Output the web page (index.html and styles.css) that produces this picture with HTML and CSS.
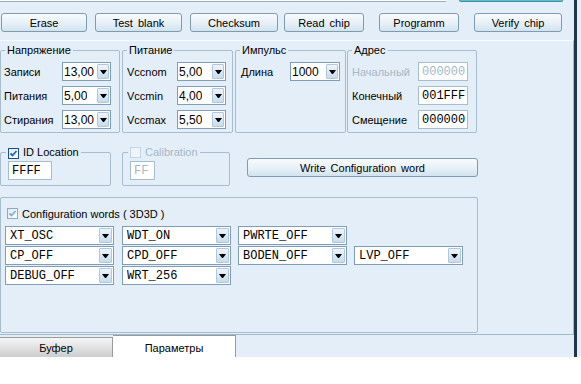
FILE: index.html
```html
<!DOCTYPE html>
<html lang="ru">
<head>
    <meta charset="UTF-8">
    <meta name="viewport" content="width=device-width, initial-scale=1.0">
    <title>Параметры</title>
    <link rel="stylesheet" href="styles.css">
</head>
<body>
    <div class="screen">
        <div class="window">
            <div class="topbar">
                <div class="top-field"></div>
                <div class="top-button"></div>
            </div>

            <div class="toolbar">
                <button class="btn btn-erase">Erase</button>
                <button class="btn btn-blank">Test blank</button>
                <button class="btn btn-checksum">Checksum</button>
                <button class="btn btn-read">Read chip</button>
                <button class="btn btn-prog">Programm</button>
                <button class="btn btn-verify">Verify chip</button>
            </div>

            <div class="page">
                <div class="groups">
                    <fieldset class="group g-voltage">
                        <legend>Напряжение</legend>
                        <div class="rows">
                            <div class="row"><span class="label">Записи</span><div class="combo"><span class="value">13,00</span><span class="drop"></span></div></div>
                            <div class="row"><span class="label">Питания</span><div class="combo"><span class="value">5,00</span><span class="drop"></span></div></div>
                            <div class="row"><span class="label">Стирания</span><div class="combo"><span class="value">13,00</span><span class="drop"></span></div></div>
                        </div>
                    </fieldset>

                    <fieldset class="group g-power">
                        <legend>Питание</legend>
                        <div class="rows">
                            <div class="row"><span class="label">Vccnom</span><div class="combo"><span class="value">5,00</span><span class="drop"></span></div></div>
                            <div class="row"><span class="label">Vccmin</span><div class="combo"><span class="value">4,00</span><span class="drop"></span></div></div>
                            <div class="row"><span class="label">Vccmax</span><div class="combo"><span class="value">5,50</span><span class="drop"></span></div></div>
                        </div>
                    </fieldset>

                    <fieldset class="group g-pulse">
                        <legend>Импульс</legend>
                        <div class="rows">
                            <div class="row"><span class="label">Длина</span><div class="combo"><span class="value">1000</span><span class="drop"></span></div></div>
                        </div>
                    </fieldset>

                    <fieldset class="group g-address">
                        <legend>Адрес</legend>
                        <div class="rows">
                            <div class="row disabled"><span class="label">Начальный</span><div class="field">000000</div></div>
                            <div class="row"><span class="label">Конечный</span><div class="field">001FFF</div></div>
                            <div class="row"><span class="label">Смещение</span><div class="field">000000</div></div>
                        </div>
                    </fieldset>
                </div>

                <div class="id-row">
                    <fieldset class="group g-id">
                        <legend><span class="check on"><svg viewBox="0 0 9 9"><path d="M1.5 4.5 L3.5 6.5 L7.5 2" /></svg></span>ID Location</legend>
                        <div class="field field-id">FFFF</div>
                    </fieldset>

                    <fieldset class="group g-calib disabled">
                        <legend><span class="check off"></span>Calibration</legend>
                        <div class="field field-calib">FF</div>
                    </fieldset>

                    <button class="btn btn-write">Write Configuration word</button>
                </div>

                <fieldset class="group g-config">
                    <div class="config-head">
                        <span class="check soft"><svg viewBox="0 0 9 9"><path d="M1.5 4.5 L3.5 6.5 L7.5 2" /></svg></span>
                        <span>Configuration words ( 3D3D )</span>
                    </div>
                    <div class="config-grid">
                        <div class="combo mono"><span class="value">XT_OSC</span><span class="drop"></span></div>
                        <div class="combo mono"><span class="value">WDT_ON</span><span class="drop"></span></div>
                        <div class="combo mono"><span class="value">PWRTE_OFF</span><span class="drop"></span></div>
                        <div></div>
                        <div class="combo mono"><span class="value">CP_OFF</span><span class="drop"></span></div>
                        <div class="combo mono"><span class="value">CPD_OFF</span><span class="drop"></span></div>
                        <div class="combo mono"><span class="value">BODEN_OFF</span><span class="drop"></span></div>
                        <div class="combo mono"><span class="value">LVP_OFF</span><span class="drop"></span></div>
                        <div class="combo mono"><span class="value">DEBUG_OFF</span><span class="drop"></span></div>
                        <div class="combo mono"><span class="value">WRT_256</span><span class="drop"></span></div>
                    </div>
                </fieldset>
            </div>

            <div class="tabs">
                <div class="tab">Буфер</div>
                <div class="tab active">Параметры</div>
            </div>
        </div>
        <div class="edge"></div>
    </div>
</body>
</html>
```

FILE: styles.css
```css
:root {
    --panel-color: #e4eef8;
    --frame-color: #9dbacc;
    --group-color: #a5bdcc;
    --input-border: #7f9db9;
    --disabled-color: #a4b7c6;
}

* {
    box-sizing: border-box;
    margin: 0;
    padding: 0;
}

body {
    width: 581px;
    height: 384px;
    overflow: hidden;
    background: #fff;
    font-family: 'Liberation Sans', Arial, sans-serif;
    font-size: 11px;
    color: #000;
}

.screen {
    display: flex;
    height: 357px;
    background: var(--panel-color);
}

.window {
    width: 574px;
    display: flex;
    flex-direction: column;
}

.edge {
    width: 3px;
    background: #1f3649;
}

/* strip of the panel above, cut by the screenshot */
.topbar {
    display: flex;
    height: 3px;
}

.top-field {
    width: 446px;
    height: 2px;
    background: #fff;
    border-bottom: 1px solid #94aebf;
}

.top-button {
    width: 104px;
    height: 2px;
    margin-left: 13px;
    background: #62bccd;
    border: 1px solid #3d8fa3;
    border-top: none;
    border-radius: 0 0 3px 3px;
}

.toolbar {
    display: flex;
    height: 37px;
    padding-top: 10px;
}

.btn {
    height: 19px;
    border: 1px solid #7d9cb0;
    border-radius: 3px;
    background: linear-gradient(#f8fbfe, #e8f1f8 50%, #d2e3ee);
    font-family: 'Liberation Sans', Arial, sans-serif;
    font-size: 11px;
    word-spacing: 2px;
    color: #000;
}

.btn-erase { width: 86px; margin-left: 1px; }
.btn-blank { width: 87px; margin-left: 8px; }
.btn-checksum { width: 88px; margin-left: 8px; }
.btn-read { width: 80px; margin-left: 6px; }
.btn-prog { width: 80px; margin-left: 15px; }
.btn-verify { width: 88px; margin-left: 15px; }

.page {
    height: 295px;
    border-top: 1px solid #f7fbfe;
    border-right: 1px solid var(--frame-color);
    border-bottom: 1px solid var(--frame-color);
    padding-top: 2px;
}

.group {
    border: 1px solid var(--group-color);
    border-radius: 2px;
    min-width: 0;
}

.group legend {
    margin-left: 4px;
    padding: 0 2px;
    line-height: 14px;
}

.groups {
    display: flex;
}

.groups .group {
    height: 90px;
}

.g-voltage { width: 120px; }
.g-power { width: 111px; margin-left: 2px; }
.g-pulse { width: 111px; margin-left: 2px; }
.g-address { width: 130px; margin-left: 1px; }

.rows {
    display: flex;
    flex-direction: column;
    gap: 5px;
    padding: 5px 0 0 3px;
}

.row {
    display: flex;
    align-items: center;
    height: 19px;
}

.g-voltage .label { width: 58px; }
.g-power .label { width: 51px; padding-left: 1px; }
.g-pulse .label { width: 51px; padding-left: 2px; }
.g-address .label { width: 67px; padding-left: 1px; }

.g-voltage .combo,
.g-power .combo { width: 49px; }
.g-pulse .combo { width: 50px; }

.combo {
    display: flex;
    align-items: center;
    height: 19px;
    border: 1px solid var(--input-border);
    background: #fff;
    padding-left: 1px;
    font-size: 12px;
}

.combo .value {
    white-space: nowrap;
    overflow: hidden;
}

.combo .drop {
    display: flex;
    flex-shrink: 0;
    align-items: center;
    justify-content: center;
    width: 12px;
    height: 15px;
    margin-left: auto;
    margin-right: 1px;
    border: 1px solid #b2c8da;
    border-radius: 1px;
    background: linear-gradient(#eef5fb, #c7dcec);
}

.combo .drop::after {
    content: '';
    width: 1px;
    height: 0;
    border-top: 4px solid #000;
    border-left: 3px solid transparent;
    border-right: 3px solid transparent;
}

.combo.mono {
    width: 109px;
    padding-left: 4px;
    font-family: 'Liberation Mono', 'Courier New', monospace;
    font-size: 12px;
}

.combo.mono .drop {
    width: 13px;
}

.field {
    display: flex;
    align-items: center;
    height: 19px;
    width: 50px;
    padding-left: 3px;
    border: 1px solid var(--group-color);
    background: #fff;
    font-family: 'Liberation Mono', 'Courier New', monospace;
    font-size: 12px;
}

.disabled,
.disabled legend,
.disabled .field {
    color: var(--disabled-color);
}

.id-row {
    display: flex;
    align-items: flex-start;
    margin-top: 12px;
}

.id-row .group {
    height: 41px;
}

.g-id { width: 111px; }
.g-calib { width: 108px; margin-left: 11px; }

.g-id legend,
.g-calib legend {
    margin-left: 5px;
}

.field-id {
    width: 44px;
    margin: 2px 0 0 7px;
}

.field-calib {
    width: 25px;
    margin: 2px 0 0 7px;
}

.btn-write {
    width: 231px;
    margin: 13px 0 0 17px;
}

.check {
    display: inline-flex;
    align-items: center;
    justify-content: center;
    width: 11px;
    height: 11px;
    margin-right: 4px;
    vertical-align: -2px;
    border: 1px solid #1c5180;
    background: linear-gradient(135deg, #dfe7ee, #fff);
}

.check svg {
    width: 9px;
    height: 9px;
    fill: none;
    stroke: #2a63b0;
    stroke-width: 1.8;
}

.check.soft {
    border-color: #86abcc;
}

.check.soft svg {
    stroke: #7fb0da;
}

.check.off {
    border-color: #c4d4e2;
    background: #eef4fa;
}

.g-config {
    width: 478px;
    height: 136px;
    margin-top: 11px;
    padding: 9px 0 0 4px;
}

.config-head {
    display: flex;
    align-items: center;
    height: 13px;
    padding-left: 2px;
}

.config-head .check {
    margin-right: 4px;
}

.config-grid {
    display: grid;
    grid-template-columns: 117px 116px 116px 109px;
    row-gap: 1px;
    margin-top: 6px;
}

.tabs {
    display: flex;
    align-items: flex-end;
    height: 22px;
}

.tab {
    display: flex;
    align-items: center;
    justify-content: center;
    width: 113px;
    height: 20px;
    border-top: 1px solid #9a9a9a;
    border-right: 1px solid #9a9a9a;
    background: linear-gradient(#f6f6f6, #cdcdcd);
}

.tab.active {
    width: 123px;
    height: 22px;
    padding-top: 3px;
    background: #fff;
}
```
